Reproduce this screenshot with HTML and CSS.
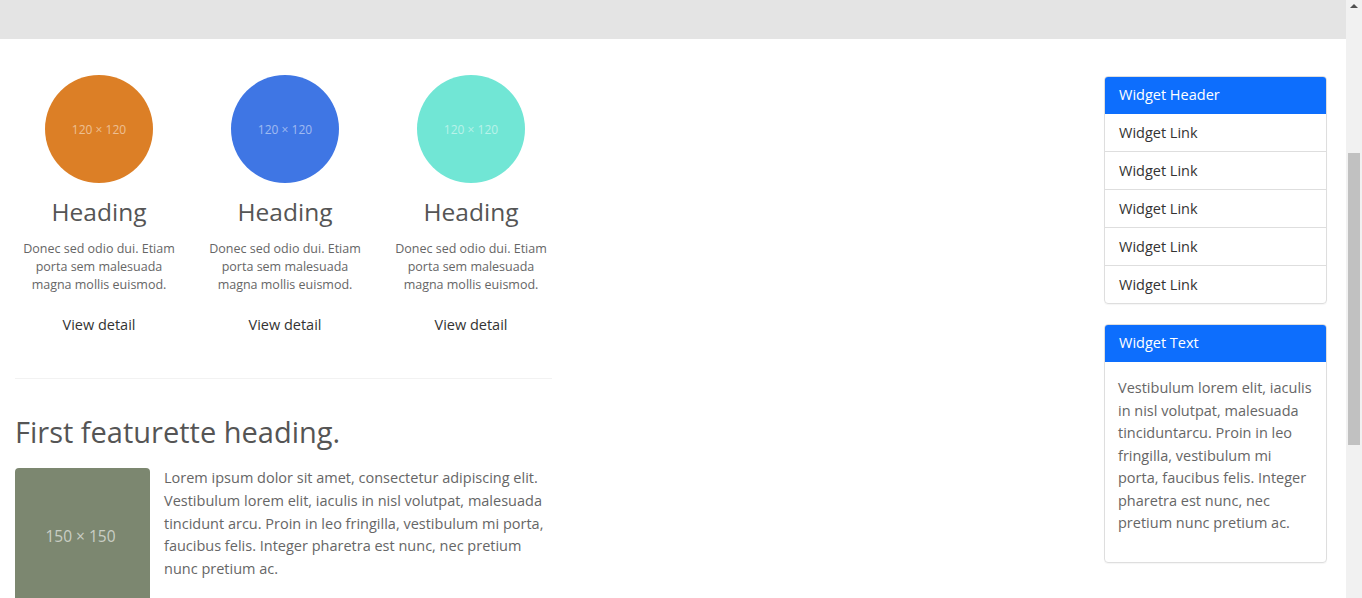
FILE: index.html
```html
<!DOCTYPE html>
<html lang="en">
<head>
<meta charset="utf-8">
<title>Page</title>
<link rel="stylesheet" href="styles.css">
</head>
<body>
<div class="page">
  <div class="viewport">
    <div class="topbar"></div>
    <div class="content">
      <main class="main">
        <div class="marketing">
          <div class="col">
            <div class="circle orange">120 × 120</div>
            <h2 class="col-heading">Heading</h2>
            <p class="col-text">Donec sed odio dui. Etiam porta sem malesuada magna mollis euismod.</p>
            <a class="col-link" href="#">View detail</a>
          </div>
          <div class="col">
            <div class="circle blue">120 × 120</div>
            <h2 class="col-heading">Heading</h2>
            <p class="col-text">Donec sed odio dui. Etiam porta sem malesuada magna mollis euismod.</p>
            <a class="col-link" href="#">View detail</a>
          </div>
          <div class="col">
            <div class="circle teal">120 × 120</div>
            <h2 class="col-heading">Heading</h2>
            <p class="col-text">Donec sed odio dui. Etiam porta sem malesuada magna mollis euismod.</p>
            <a class="col-link" href="#">View detail</a>
          </div>
        </div>
        <hr class="divider">
        <h2 class="feature-heading">First featurette heading.</h2>
        <div class="feature">
          <div class="feature-img">150 × 150</div>
          <p class="feature-text">Lorem ipsum dolor sit amet, consectetur adipiscing elit. Vestibulum lorem elit, iaculis in nisl volutpat, malesuada tincidunt arcu. Proin in leo fringilla, vestibulum mi porta, faucibus felis. Integer pharetra est nunc, nec pretium nunc pretium ac.</p>
        </div>
      </main>
      <aside class="sidebar">
        <div class="widget">
          <div class="widget-header">Widget Header</div>
          <a class="widget-link" href="#">Widget Link</a>
          <a class="widget-link" href="#">Widget Link</a>
          <a class="widget-link" href="#">Widget Link</a>
          <a class="widget-link" href="#">Widget Link</a>
          <a class="widget-link last" href="#">Widget Link</a>
        </div>
        <div class="widget">
          <div class="widget-header">Widget Text</div>
          <div class="widget-body">Vestibulum lorem elit, iaculis in nisl volutpat, malesuada tinciduntarcu. Proin in leo fringilla, vestibulum mi porta, faucibus felis. Integer pharetra est nunc, nec pretium nunc pretium ac.</div>
        </div>
      </aside>
    </div>
  </div>
  <div class="scrollbar">
    <div class="scroll-arrow"></div>
    <div class="scroll-thumb"></div>
  </div>
</div>
</body>
</html>
```

FILE: styles.css
```css
html, body {
  margin: 0;
  padding: 0;
  height: 598px;
  overflow: hidden;
}
body {
  font-family: "Open Sans", "Noto Sans", sans-serif;
  color: #666;
  background: #fff;
}
.page {
  display: flex;
  height: 598px;
}
.viewport {
  flex: 1;
  min-width: 0;
  overflow: hidden;
}
.topbar {
  height: 39px;
  background: #e4e4e4;
}
.content {
  display: flex;
  align-items: flex-start;
}
.main {
  width: 537px;
  margin-left: 15px;
  padding-top: 36px;
}
.marketing {
  display: grid;
  grid-template-columns: 186px 186px 186px;
  margin-left: -9px;
}
.col {
  display: flex;
  flex-direction: column;
  align-items: center;
  padding: 0 12px;
  text-align: center;
}
.circle {
  width: 108px;
  height: 108px;
  border-radius: 50%;
  display: flex;
  align-items: center;
  justify-content: center;
  font-size: 12px;
  color: rgba(255, 255, 255, 0.5);
}
.orange { background: #dc7f26; }
.blue { background: #3f76e4; }
.teal { background: #71e6d5; }
.col-heading {
  margin: 13px 0 0;
  font-size: 24.5px;
  font-weight: 400;
  line-height: 31px;
  color: #555;
}
.col-text {
  margin: 13px 0 0;
  font-size: 12.5px;
  line-height: 18px;
  color: #666;
}
.col-link {
  margin-top: 20px;
  font-size: 14.5px;
  line-height: 21px;
  color: #333;
  text-decoration: none;
}
.divider {
  margin: 43px 0 0;
  border: 0;
  border-top: 1px solid #f2f2f2;
  height: 0;
}
.feature-heading {
  margin: 35px 0 0;
  font-size: 29px;
  font-weight: 400;
  line-height: 36px;
  color: #555;
}
.feature {
  display: flex;
  align-items: flex-start;
  gap: 14px;
  margin-top: 18px;
}
.feature-img {
  flex: 0 0 135px;
  height: 135px;
  border-radius: 4px;
  background: #7c8770;
  display: flex;
  align-items: center;
  justify-content: center;
  padding-right: 4px;
  box-sizing: border-box;
  font-size: 15.5px;
  color: rgba(255, 255, 255, 0.6);
}
.feature-text {
  margin: -1px 0 0;
  font-size: 14.5px;
  line-height: 22.75px;
  color: #666;
}
.sidebar {
  margin-left: auto;
  margin-right: 19px;
  width: 223px;
  padding-top: 37px;
  display: flex;
  flex-direction: column;
  gap: 20px;
}
.widget {
  border: 1px solid #dedede;
  border-radius: 4px;
  overflow: hidden;
  display: flex;
  flex-direction: column;
  box-shadow: 0 1px 1px rgba(0, 0, 0, 0.04);
}
.widget-header {
  margin: -1px -1px 0;
  height: 38px;
  line-height: 38px;
  padding: 0 15px;
  background: #0d6efd;
  color: #fff;
  font-size: 14.5px;
  font-weight: 500;
}
.widget-link {
  height: 37px;
  line-height: 37px;
  padding: 0 14px;
  border-bottom: 1px solid #dedede;
  font-size: 14.5px;
  color: #333;
  text-decoration: none;
}
.widget-link.last {
  border-bottom: 0;
}
.widget-body {
  padding: 15px 13px 27px 13px;
  font-size: 14.5px;
  line-height: 22.5px;
  color: #666;
}
.scrollbar {
  flex: 0 0 16px;
  background: #f1f1f1;
  display: flex;
  flex-direction: column;
  align-items: center;
}
.scroll-arrow {
  margin-top: 4px;
  width: 0;
  height: 0;
  border-left: 4px solid transparent;
  border-right: 4px solid transparent;
  border-bottom: 4px solid #505050;
}
.scroll-thumb {
  margin-top: 145px;
  width: 12px;
  height: 292px;
  background: #c1c1c1;
}
```
